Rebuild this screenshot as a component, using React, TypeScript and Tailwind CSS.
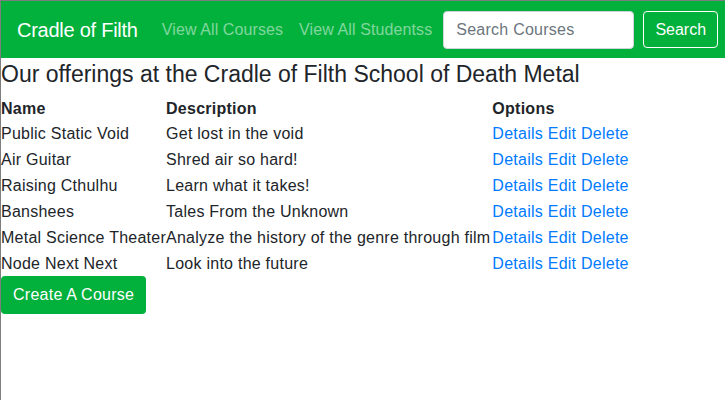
const courses = [
  { name: "Public Static Void", description: "Get lost in the void" },
  { name: "Air Guitar", description: "Shred air so hard!" },
  { name: "Raising Cthulhu", description: "Learn what it takes!" },
  { name: "Banshees", description: "Tales From the Unknown" },
  { name: "Metal Science Theater", description: "Analyze the history of the genre through film" },
  { name: "Node Next Next", description: "Look into the future" },
];

export default function App() {
  return (
    <div className="min-h-[400px] w-[725px] border-l border-t border-[#7d7d7d] bg-white font-['Liberation_Sans',Arial,sans-serif] tracking-[0.25px] text-[#212529]">
      {/* Navbar */}
      <nav className="flex h-[57px] items-center whitespace-nowrap bg-[#02b03c] pl-4">
        <a className="mr-[24px] text-[20px] tracking-[-0.25px] text-white">Cradle of Filth</a>
        <a className="mr-4 text-base tracking-[0.1px] text-white/50">View All Courses</a>
        <a className="text-base tracking-[0.1px] text-white/50">View All Studentss</a>
        <div className="ml-[11px] flex items-center gap-[9px]">
          <input
            className="h-[38px] w-[191px] rounded border border-[#ced4da] bg-white px-3 text-base text-[#495057] placeholder:text-[#6c757d]"
            placeholder="Search Courses"
          />
          <button className="h-[37px] w-[75px] rounded border border-white text-base tracking-normal text-white">
            Search
          </button>
        </div>
      </nav>

      <h4 className="mt-[3px] text-[23px] leading-[1.2] tracking-normal">
        Our offerings at the Cradle of Filth School of Death Metal
      </h4>

      <table className="mt-[8px] border-collapse text-base">
        <thead>
          <tr className="h-[24px]">
            <th className="p-0 pr-[2px] text-left font-bold">Name</th>
            <th className="p-0 text-left font-bold">Description</th>
            <th className="p-0 text-left font-bold">Options</th>
          </tr>
        </thead>
        <tbody>
          {courses.map((c) => (
            <tr key={c.name} className="h-[26px]">
              <td className="p-0">{c.name}</td>
              <td className="p-0 pr-[2px]">{c.description}</td>
              <td className="p-0 text-[#007bff]">
                <a>Details</a> <a>Edit</a> <a>Delete</a>
              </td>
            </tr>
          ))}
        </tbody>
      </table>

      <button className="mt-[-1px] h-[38px] rounded bg-[#02b03c] px-3 text-base text-white">
        Create A Course
      </button>
    </div>
  );
}
